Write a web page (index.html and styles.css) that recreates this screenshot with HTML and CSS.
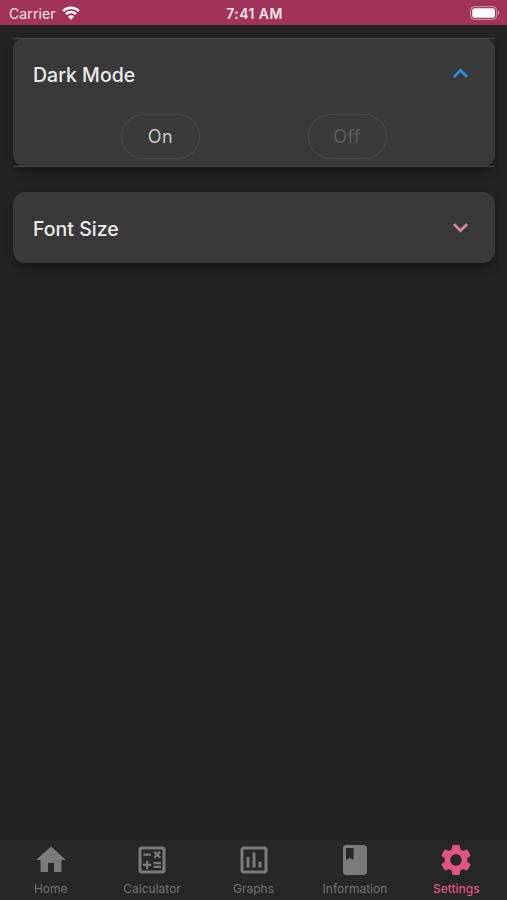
FILE: index.html
```html
<!DOCTYPE html>
<html lang="en">
<head>
    <meta charset="UTF-8">
    <meta name="viewport" content="width=device-width, initial-scale=1.0">
    <title>Settings</title>
    <link rel="stylesheet" href="styles.css">
</head>

<body>

<!-- Status bar -->
<div class="status-bar">
    <div class="carrier">
        <span class="carrier-name">Carrier</span>
        <svg class="wifi" viewBox="0 0 18 14">
            <path d="M1.1 5.1a11 11 0 0 1 15.8 0M4 8.1a7 7 0 0 1 10 0" fill="none" stroke="#fff" stroke-width="2.5"/>
            <path d="M9 13.8L5.9 10.6a4.4 4.4 0 0 1 6.2 0z" fill="#fff"/>
        </svg>
    </div>
    <span class="time">7:41 AM</span>
    <svg class="battery" viewBox="0 0 30 14">
        <rect x="0.6" y="0.6" width="26" height="12.8" rx="3.8" fill="none" stroke="#fff" stroke-opacity="0.5"/>
        <rect x="2.2" y="2.2" width="22.8" height="9.6" rx="2.4" fill="#fff"/>
        <path d="M28 4.8c2 .8 2 3.6 0 4.4z" fill="#fff" fill-opacity="0.5"/>
    </svg>
</div>

<!-- Settings list -->
<main>
    <section class="card open">
        <div class="card-header">
            <h2>Dark Mode</h2>
            <svg class="chevron up" viewBox="0 0 24 24"><path d="M12 8l-6 6 1.41 1.41L12 10.83l4.59 4.58L18 14z"/></svg>
        </div>
        <div class="options">
            <button class="option">On</button>
            <button class="option" disabled>Off</button>
        </div>
    </section>

    <section class="card">
        <div class="card-header">
            <h2>Font Size</h2>
            <svg class="chevron down" viewBox="0 0 24 24"><path d="M16.59 8.59L12 13.17 7.41 8.59 6 10l6 6 6-6z"/></svg>
        </div>
    </section>
</main>

<!-- Tabs -->
<nav>
    <a class="tab">
        <svg viewBox="0 0 24 24"><path d="M10 20v-6h4v6h5v-8h3L12 3 2 12h3v8z"/></svg>
        <span>Home</span>
    </a>
    <a class="tab">
        <svg viewBox="0 0 24 24"><path d="M19 3H5c-1.1 0-2 .9-2 2v14c0 1.1.9 2 2 2h14c1.1 0 2-.9 2-2V5c0-1.1-.9-2-2-2zm0 16H5V5h14v14z"/><path d="M6.25 7.72h5v1.5h-5zM13 15.75h5v1.5h-5zM13 13.25h5v1.5h-5zM8 18h1.5v-2h2v-1.5h-2v-2H8v2H6V16h2zM14.09 10.95l1.41-1.41 1.41 1.41 1.06-1.06-1.41-1.42 1.41-1.41L16.91 6 15.5 7.41 14.09 6l-1.06 1.06 1.41 1.41-1.41 1.42z"/></svg>
        <span>Calculator</span>
    </a>
    <a class="tab">
        <svg viewBox="0 0 24 24"><path d="M19 3H5c-1.1 0-2 .9-2 2v14c0 1.1.9 2 2 2h14c1.1 0 2-.9 2-2V5c0-1.1-.9-2-2-2zm0 16H5V5h14v14zM7 10h2v7H7zM11 7h2v10h-2zM15 13h2v4h-2z"/></svg>
        <span>Graphs</span>
    </a>
    <a class="tab">
        <svg viewBox="0 0 24 24"><path d="M18 2H6c-1.1 0-2 .9-2 2v16c0 1.1.9 2 2 2h12c1.1 0 2-.9 2-2V4c0-1.1-.9-2-2-2zM6 4h5v8l-2.5-1.5L6 12V4z"/></svg>
        <span>Information</span>
    </a>
    <a class="tab active">
        <svg viewBox="0 0 24 24"><path d="M19.43 12.98c.04-.32.07-.64.07-.98s-.03-.66-.07-.98l2.11-1.65c.19-.15.24-.42.12-.64l-2-3.46c-.12-.22-.39-.3-.61-.22l-2.49 1c-.52-.4-1.08-.73-1.69-.98l-.38-2.65C14.46 2.18 14.25 2 14 2h-4c-.25 0-.46.18-.49.42l-.38 2.65c-.61.25-1.17.59-1.69.98l-2.49-1c-.23-.09-.49 0-.61.22l-2 3.46c-.13.22-.07.49.12.64l2.11 1.65c-.04.32-.07.65-.07.98s.03.66.07.98l-2.11 1.65c-.19.15-.24.42-.12.64l2 3.46c.12.22.39.3.61.22l2.49-1c.52.4 1.08.73 1.69.98l.38 2.65c.03.24.24.42.49.42h4c.25 0 .46-.18.49-.42l.38-2.65c.61-.25 1.17-.59 1.69-.98l2.49 1c.23.09.49 0 .61-.22l2-3.46c.12-.22.07-.49-.12-.64l-2.11-1.65zM12 15.8c-2.1 0-3.8-1.7-3.8-3.8s1.7-3.8 3.8-3.8 3.8 1.7 3.8 3.8-1.7 3.8-3.8 3.8z"/></svg>
        <span>Settings</span>
    </a>
</nav>

</body>
</html>
```

FILE: styles.css
```css
* {
    box-sizing: border-box;
}
body {
    margin: 0;
    height: 100vh;
    display: flex;
    flex-direction: column;
    font-family: Inter, 'Liberation Sans', sans-serif;
    background: #232323;
    color: #ececec;
    overflow: hidden;
}

/* Status bar */
.status-bar {
    display: grid;
    grid-template-columns: 1fr auto 1fr;
    align-items: center;
    height: 25px;
    padding: 2px 7px 0 9px;
    background: #a13359;
    color: #f6e6ec;
    font-size: 14px;
    line-height: 18px;
}
.carrier {
    display: flex;
    align-items: center;
    gap: 6px;
}
.carrier-name {
    letter-spacing: 0.1px;
}
.wifi {
    width: 18px;
    height: 14px;
    margin-top: -2px;
}
.time {
    font-weight: 600;
    font-size: 14px;
    letter-spacing: 0.45px;
}
.battery {
    width: 30px;
    height: 14px;
    justify-self: end;
    margin-top: -2px;
}

/* Cards */
main {
    flex: 1;
    display: flex;
    flex-direction: column;
    gap: 25px;
    padding: 13px 12.5px 0 13px;
}
.card {
    position: relative;
    height: 71px;
    background: #393939;
    border-radius: 12px;
    box-shadow: 0 5px 9px rgba(0, 0, 0, 0.35);
}
.card.open {
    height: 129px;
}
/* the dividers run square across the rounded corners */
.card.open::after {
    content: '';
    position: absolute;
    inset: 0;
    border-top: 1px solid #494949;
    border-bottom: 1px solid #494949;
}
.card-header {
    display: flex;
    align-items: center;
    justify-content: space-between;
    height: 72px;
    padding: 0 20px;
}
h2 {
    margin: 0;
    padding-top: 1px;
    font-size: 19.5px;
    font-weight: 500;
    letter-spacing: 0;
}
.chevron {
    width: 29px;
    height: 29px;
    margin-top: -2px;
    stroke-width: 0.4;
}
.up {
    fill: #2b8fe8;
    stroke: #2b8fe8;
}
.down {
    fill: #dd86a3;
    stroke: #dd86a3;
}
.options {
    display: flex;
    justify-content: space-around;
    padding: 4px 54px 0;
}
.option {
    width: 79px;
    height: 45px;
    padding: 0;
    border: 1.5px solid #4b4b4b;
    border-radius: 23px;
    background: none;
    color: #c9c9c9;
    font-family: inherit;
    font-size: 18px;
    letter-spacing: 0.4px;
}
.option:disabled {
    color: #5e5e5e;
}

/* Tab bar */
nav {
    display: flex;
    height: 60px;
    background: #272727;
}
.tab {
    flex: 1;
    display: flex;
    flex-direction: column;
    align-items: center;
    padding-top: 2px;
    color: #727272;
    font-size: 12px;
    line-height: 16px;
}
.tab svg {
    width: 36px;
    height: 36px;
    margin-bottom: 3px;
    fill: #7b7b7b;
}
.tab.active {
    color: #de5583;
    font-weight: 500;
}
.tab.active svg {
    fill: #de5583;
}
```
